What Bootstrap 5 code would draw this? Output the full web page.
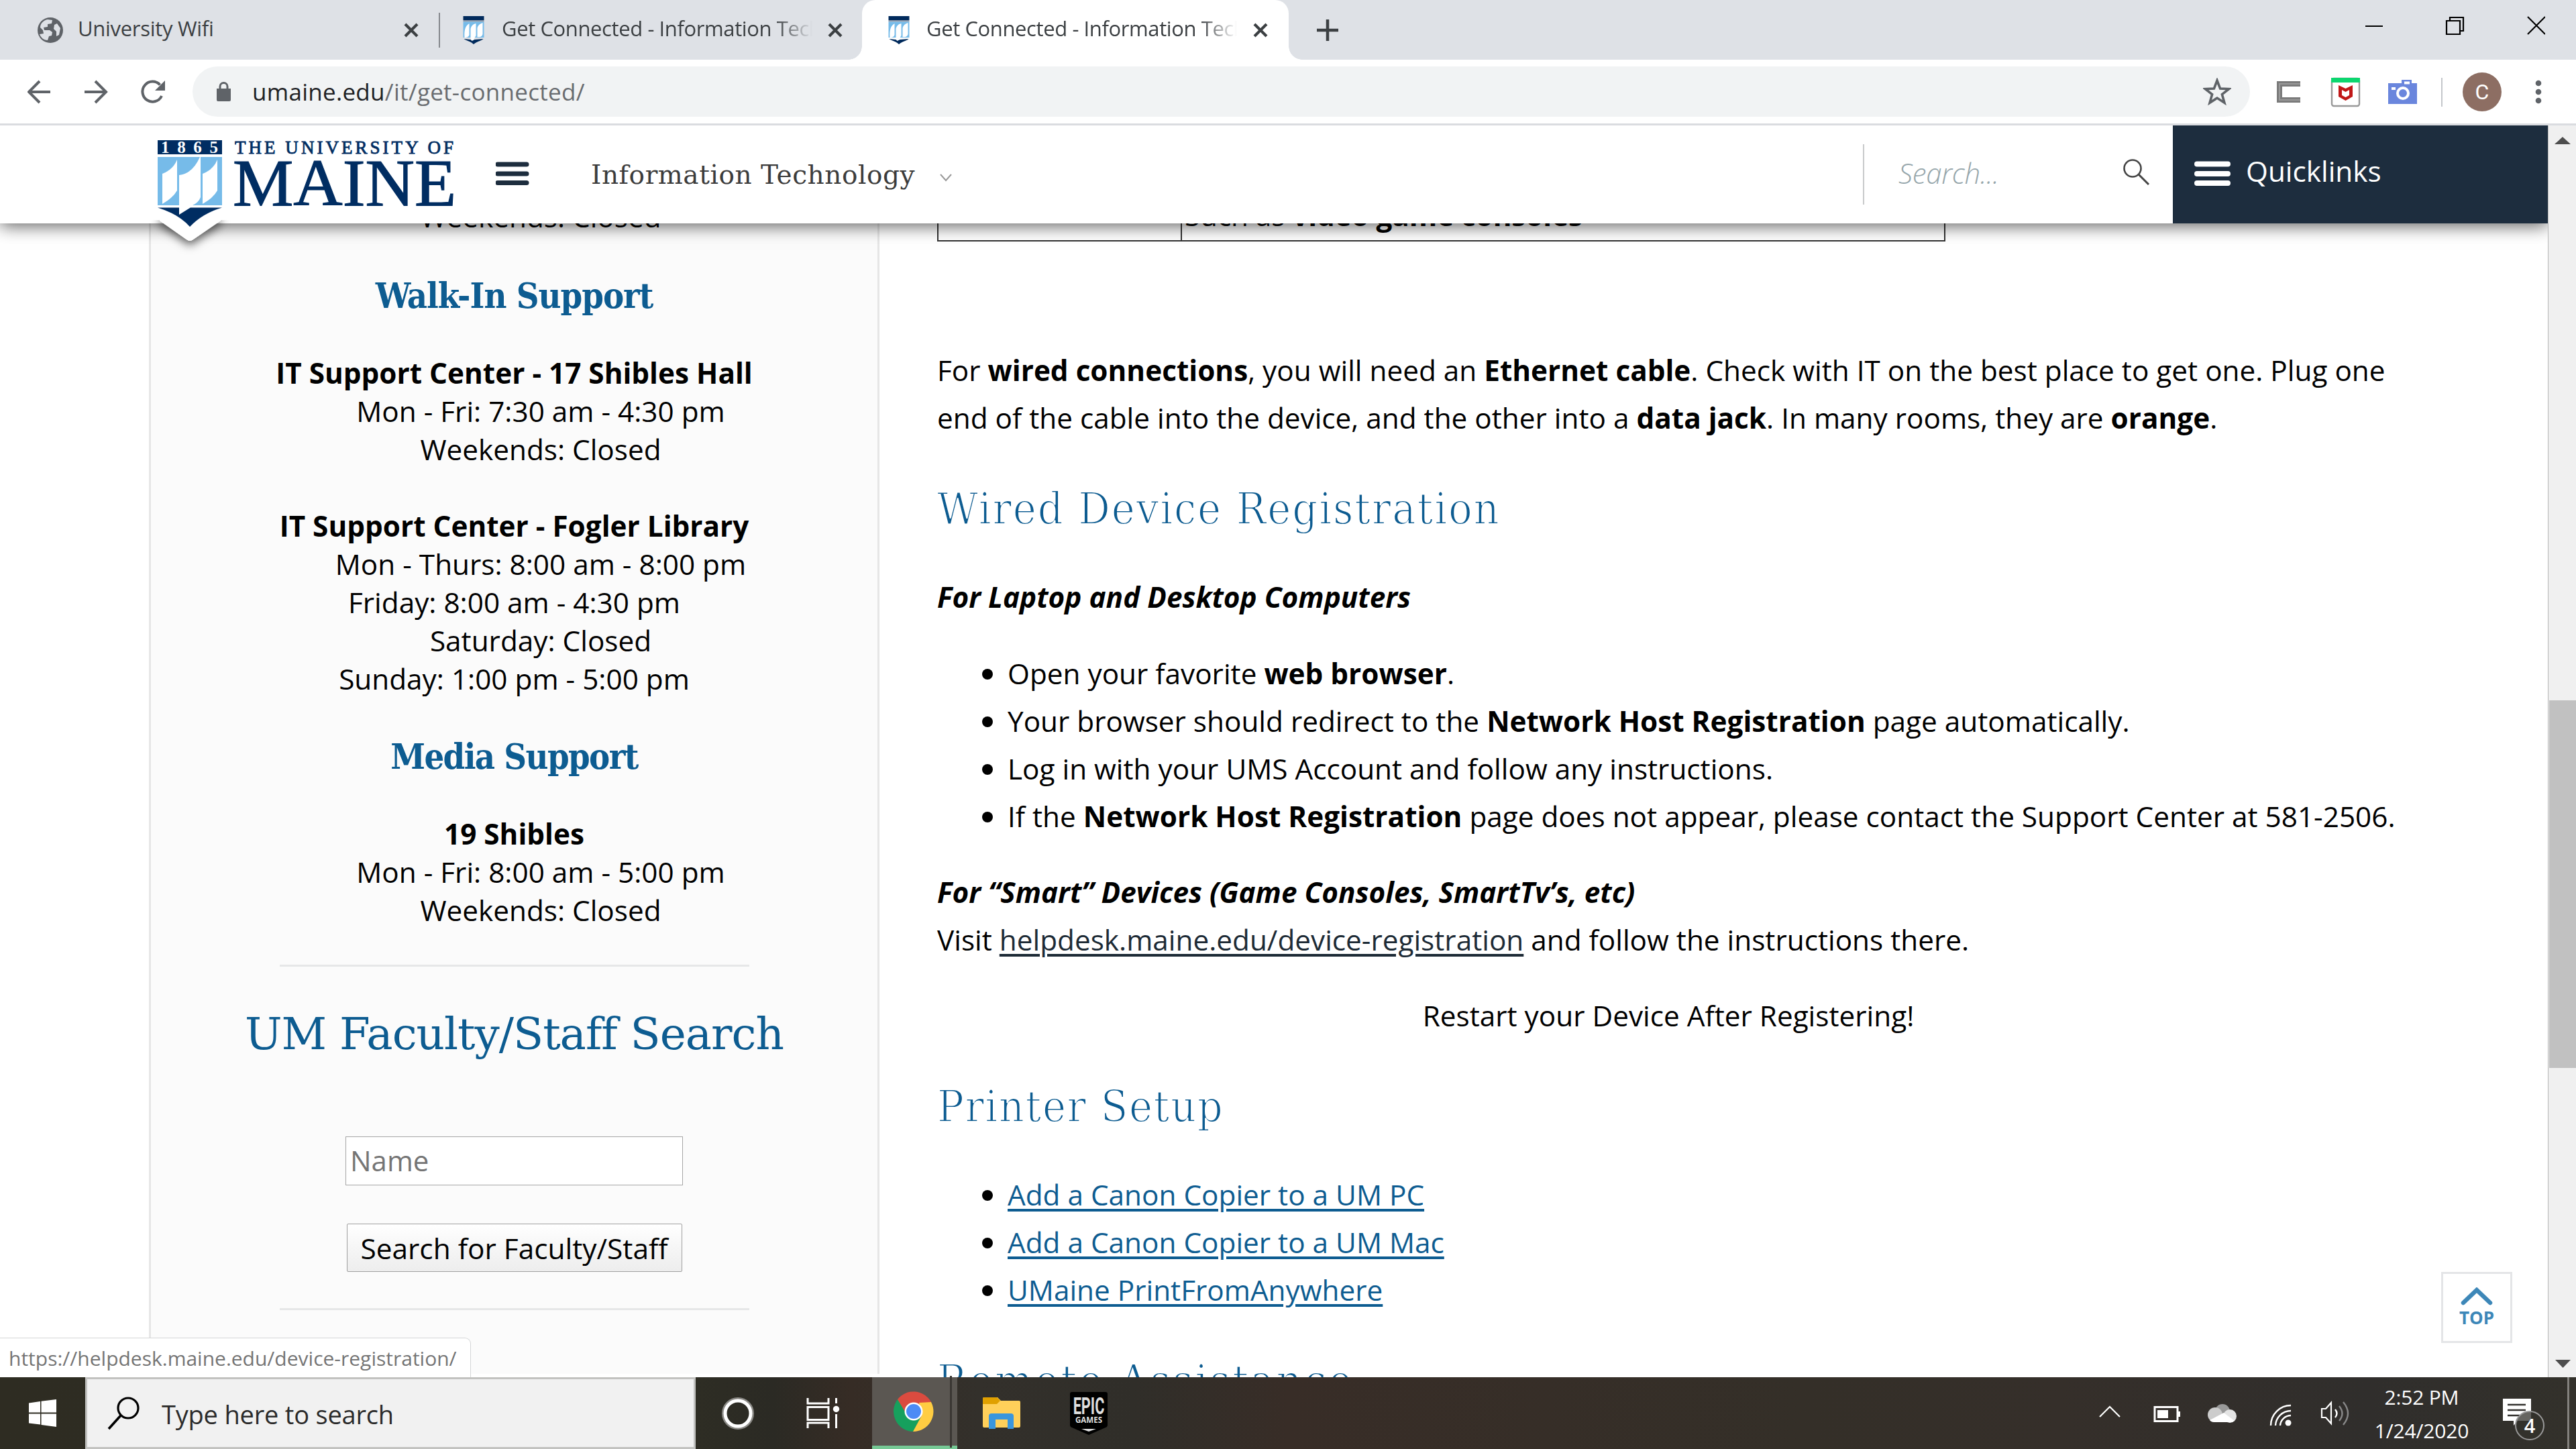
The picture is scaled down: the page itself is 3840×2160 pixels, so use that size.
<!DOCTYPE html>
<html lang="en">
<head>
<meta charset="utf-8">
<title>Get Connected - Information Technology</title>
<link href="https://cdn.jsdelivr.net/npm/bootstrap@5.3.0/dist/css/bootstrap.min.css" rel="stylesheet">
<style>
html,body{width:3840px;height:2160px;overflow:hidden}
body{font-family:"Open Sans",sans-serif;font-size:42.300px;line-height:57px;color:#000;background:#fff}
svg{display:block;flex:none}
.tabstrip{height:89px;background:#dee1e6;font-size:31px;line-height:89px;color:#3c4043;letter-spacing:-.4px}
.btab{height:89px}
.btab .ttl{overflow:hidden;white-space:nowrap;height:89px;line-height:84px;width:463px}
.fade-r{-webkit-mask-image:linear-gradient(90deg,#000 88%,transparent 100%)}
.t1{width:655px;padding-left:56px}.t2{width:630px;padding-left:34px}.t3{width:636px;padding-left:39px;background:#fff;border-radius:20px 20px 0 0}
.t1 .ttl{margin-left:22px;width:486px;letter-spacing:-.3px}.t2 .ttl{margin-left:25px}.t3 .ttl{margin-left:25px}
.t2 .cls{margin-left:23px}.t3 .cls{margin-left:24px}
.t3::before,.t3::after{content:"";position:absolute;bottom:0;width:20px;height:20px}
.t3::before{left:-20px;background:radial-gradient(circle at 0 0,transparent 19.5px,#fff 20px)}
.t3::after{right:-20px;background:radial-gradient(circle at 100% 0,transparent 19.5px,#fff 20px)}
.tsep{width:2px;height:52px;background:#85888d;margin:1px -1px 0}
.newtab{margin-left:41px}
.winctl{margin:0 46px 14px auto}
.toolbar{height:98px;border-bottom:3px solid #dadce0;padding-left:41px;background:#fff}
.omni{width:3067px;height:75px;border-radius:38px;background:#f1f3f4;margin-left:40px;padding:0 28px 0 36px;font-size:35px;color:#202124}
.omni .url{line-height:70px;margin-left:32px;white-space:nowrap;letter-spacing:.28px}
.omni .path{color:#696c70}
.exts{margin-left:37px}
.site{height:146px;background:#fff;width:3798px;z-index:5;box-shadow:0 4px 24px rgba(0,0,0,.62);clip-path:inset(0 0 -60px 0)}
.slab{font-family:"DejaVu Serif Condensed","DejaVu Serif",serif;font-stretch:condensed}
.slab-w{font-family:"DejaVu Serif",serif}
.brand{width:460px;height:180px;margin-left:222px;overflow:visible}
.burger{margin:-3px 0 0 57px}
.dept{font-size:39px;color:#3c3c3c;margin:2px 0 0 92px;width:484px;white-space:nowrap;line-height:56px;letter-spacing:.55px}
.chev{margin:10px 1358px 0 36px}
.vsep{width:2px;height:90px;background:#c8cacb}
.srch{font-style:italic;font-weight:300;font-size:42px;color:#96a6ab;margin:-5px 0 0 51px;width:335px;letter-spacing:-.3px}
.glass{margin-top:-6px}
.quick{width:559px;height:146px;background:#1d2d3e;color:#fff;padding-left:32px;font-size:42.300px}
.quick .lbl{margin:-12px 0 0 23px}
.quick svg{margin-top:-3px}
.vport{height:1720px}
.side{margin-left:222px;width:1089px;height:1715px;border:solid #e6e6e6;border-width:0 3px;background:#fbfbfb;text-align:center;overflow:hidden;flex:none}
.side p{margin:0;white-space:nowrap}
.side .ind{padding-left:79px}
.side .first{margin-top:-39px}
.side .gap{margin-top:57px}
.side .after-h{margin-top:56px}
.h-sm{font-size:52px;line-height:60px;font-weight:700;color:#0d5c91;margin:57px 0 0;white-space:nowrap}
.walk{margin-top:60px;letter-spacing:-1px}.media{margin-top:58px;letter-spacing:-1.6px}
.h-lg{font-size:66px;line-height:80px;color:#0d5c91;margin:61px 0 0;font-weight:400;white-space:nowrap}
.h-fac{letter-spacing:-1.05px}
.h-thin{-webkit-text-stroke:1.800px #fff}
.ls-a{letter-spacing:1.85px}.ls-b{letter-spacing:1.5px}.ls-c{letter-spacing:3.1px}
.rule{width:700px;height:3px;background:#e6e7e8;margin:0 auto}
.side .rule.r1{margin-top:53px}
.namebox{width:503px;height:73px;border:1px solid #a6a6a6;border-radius:0;background:#fff;margin:112px auto 0;padding:0 6px;font-size:42px;line-height:70px;color:#757575;text-align:left}
.gobtn{display:block;width:500px;height:72px;border:1px solid #a0a0a0;border-radius:2px;background:linear-gradient(#fff,#ededed);margin:57px auto 54px;padding:0;font-size:42.400px;line-height:67px;color:#000;white-space:nowrap}
.main{margin-left:86px;width:2180px;line-height:71px;flex:none}
.main p{margin:0;white-space:nowrap}
.main p.intro{margin-top:156px}.main p.sub1{margin-top:55px}.main p.sub2{margin-top:42px}.main p.again{margin-top:42px}
.tbl{width:1503px;height:27px;border:solid #333;border-width:0 2px 2px 2px;line-height:57px}
.tbl .c1{width:363px;border-right:2px solid #333}
.tbl .c2{padding-left:4px;white-space:nowrap;margin-top:-41px;letter-spacing:-.1px}
.pts{list-style:none;margin:43px 0 0;padding:0 0 0 105px}
.pts.prn{margin-top:55px}
.pts li{white-space:nowrap;position:relative}
.pts li::before{content:"";position:absolute;left:-38px;top:29px;width:16px;height:16px;border-radius:50%;background:#000}
.main a{color:#0d5c91;text-decoration-thickness:4px;text-underline-offset:5px}
.main a.dk{color:#1d2b36}
.sbar{width:42px;background:#f0f0f0;border-left:1px solid #b8b8b8;right:0;top:187px;height:1866px;z-index:4}
.thumb{width:40px;height:548px;margin-left:1px;background:#c1c1c1}
.topbtn{left:3639px;top:1896px;width:106px;height:106px;border:3px solid #e4e5e7;background:#fff;color:#3d87b8;font-size:26px;font-weight:700;line-height:34px}
.topbtn svg{margin-top:20px}
.status{left:0;top:1994px;width:702px;height:59px;background:#fff;border:1px solid #d4d5d6;border-width:1px 1px 0 0;border-top-right-radius:9px;padding-left:13px;font-size:30px;line-height:60px;color:#757575;white-space:nowrap;z-index:6}
.taskbar{height:107px;background:linear-gradient(90deg,#2e2c22 0,#2e2d24 27%,#2b2a24 30%,#362c25 33%,#33302b 38%,#302e29 44%,#382d27 50%,#342f28 70%,#352f2a 80%,#302e2c 92%,#33312b 100%);color:#fff}
.startb{width:127px;padding-left:43px;padding-bottom:1px}
.tsearch{width:910px;height:107px;border:3px solid #c2c2c0;background:#f1f1f1;color:#2b2b2b;font-size:38px;padding-left:30px;letter-spacing:-.2px}
.tsearch div{margin:3px 0 0 33px}
.chrometile{width:127px;height:107px;background:#5b5752;border-bottom:5px solid #76c995;margin-left:48px;padding-left:32px}
.chrometile .edge{width:3px;height:107px;background:#3a3733;margin:0 8px 0 auto}
.apps{margin-left:38px}
.tray{margin-left:1475px}
.clock{font-size:30px;line-height:50px;width:170px;text-align:center;margin:2px 0 0 19px;letter-spacing:-.2px}
.notif{margin:18px 0 0 34px}
.peek{width:3px;height:107px;background:#83817d;margin-left:32px}
</style>
</head>
<body class="d-flex flex-column position-relative">
<svg width="0" height="0" class="position-absolute"><defs>
<symbol id="crest" viewBox="0 0 31 42"><path fill="#002a5c" d="M0 0h31v6H0z"/><path fill="#8b99ab" d="M0 6h31v2.500H0z"/><path fill="#76bbe9" d="M0 8.500h31V32H0z"/><path fill="#fff" d="M2 32c-.5-9 0-17 7-21v17c-1 3-3 4-7 4zm9 0V19c1-4 3-7 8-8v18l-5 9c-2-2-3-4-3-6zm10-1V18c1-4 3-6 8-8v17c-1 3-3 5-8 4z"/><path fill="#002a5c" d="M1 34l10 1 2 2 4-2 13-1c-3 3-8 3-14.500 8C10 37 5 37 1 34z"/></symbol>
<symbol id="xx" viewBox="0 0 22 22"><path d="M2 2l18 18M20 2L2 20" stroke="#3c4043" stroke-width="4.200"/></symbol>
</defs></svg>

<div class="tabstrip d-flex align-items-center">
  <div class="btab t1 d-flex align-items-center">
    <svg width="38" height="38" viewBox="0 0 38 38"><circle cx="19" cy="19" r="19" fill="#5f6368"/><path d="M4 15c0-6 5-11 11-12l7 1-1 5-6 1v4l-6 1 1 4 8 0 4 3-1 5-4 1-2 6c-6 0-10-4-12-9l6-1-1-5z" fill="#dee1e6"/><path d="M29 9l5 7-2 10-4 2 0-7-4-4 1-6z" fill="#dee1e6"/></svg>
    <div class="ttl">University Wifi</div>
    <svg width="22" height="22"><use href="#xx"/></svg>
  </div>
  <div class="tsep"></div>
  <div class="btab t2 d-flex align-items-center">
    <svg width="34" height="42"><use href="#crest"/></svg>
    <div class="ttl fade-r">Get Connected - Information Technology</div>
    <svg class="cls" width="22" height="22"><use href="#xx"/></svg>
  </div>
  <div class="btab t3 d-flex align-items-center position-relative">
    <svg width="32" height="42"><use href="#crest"/></svg>
    <div class="ttl fade-r">Get Connected - Information Technology</div>
    <svg class="cls" width="22" height="22"><use href="#xx"/></svg>
  </div>
  <svg class="newtab" width="34" height="34" viewBox="0 0 34 34"><path d="M17 1v32M1 17h32" stroke="#3c4043" stroke-width="4.500"/></svg>
  <svg class="winctl" width="268" height="28" viewBox="0 0 268 28"><g fill="none" stroke="#000" stroke-width="2.200"><path d="M0 15h26M121 7h20v20h-20zM126 7V2h20v20h-5M242 1l26 26M268 1l-26 26"/></g></svg>
</div>

<div class="toolbar d-flex align-items-center">
  <svg width="206" height="38" viewBox="0 0 206 38"><g fill="none" stroke="#5f6368" stroke-width="4"><path d="M34 19H3M18 3L2 19l16 16M85 19h31M101 3l16 16-16 16"/><path d="M197.500 8.500A15 15 0 1 0 200 25"/></g><path d="M205 2v15h-15z" fill="#5f6368"/></svg>
  <div class="omni d-flex align-items-center">
    <svg width="21" height="29" viewBox="0 0 21 29"><path d="M0 10h21v17q0 2-2 2H2q-2 0-2-2z" fill="#5f6368"/><path d="M5 11V7a5.500 5.500 0 0 1 11 0v4" fill="none" stroke="#5f6368" stroke-width="3"/></svg>
    <div class="url">umaine.edu<span class="path">/it/get-connected/</span></div>
    <svg class="ms-auto" width="42" height="42" viewBox="0 0 42 42"><path d="M21 4l4.600 12.100 13 .6-10.200 8 3.500 12.500L21 30.100l-10.900 7.100 3.500-12.500-10.200-8 13-.6z" fill="none" stroke="#5f6368" stroke-width="3.600"/></svg>
  </div>
  <svg class="exts" width="410" height="60" viewBox="3390 106 410 60">
    <path d="M3428 124h-31v24h31" fill="none" stroke="#7b7b7b" stroke-width="8"/><path d="M3428 124h-31v24h31" fill="none" stroke="#999" stroke-width="2"/>
    <rect x="3475" y="116" width="41" height="41" rx="3" fill="#fff" stroke="#999" stroke-width="2.400"/><path d="M3474 115h43v7h-43z" fill="#0cd66f"/><path d="M3485 126l10.500 5 10.500-5v17l-10.500 6-10.500-6z" fill="#c01818"/><path d="M3490 133l5.500 3 5.500-3v8l-5.500 3-5.500-3z" fill="#fff"/>
    <path d="M3559 123h20v-5h15v5h8v31h-43z" fill="#6a86dd"/><path d="M3583 120.500h8v4h-8z" fill="#fff"/><circle cx="3581" cy="138" r="8" fill="none" stroke="#fff" stroke-width="4"/><path d="M3564 129h6v4h-6z" fill="#fff"/>
    <path d="M3639 115v43" stroke="#c4c7cb" stroke-width="2"/>
    <circle cx="3699" cy="136" r="29" fill="#8d6e63"/><text x="3699" y="147" text-anchor="middle" font-family="Roboto" font-size="32" fill="#fff">C</text>
    <g fill="#5f6368"><circle cx="3783" cy="123" r="4.300"/><circle cx="3783" cy="136" r="4.300"/><circle cx="3783" cy="149" r="4.300"/></g>
  </svg>
</div>

<div class="site d-flex align-items-center position-relative flex-shrink-0">
  <svg class="brand align-self-start" viewBox="222 187 460 180">
    <defs><filter id="sh" x="-40%" y="-40%" width="180%" height="200%"><feDropShadow dx="0" dy="6" stdDeviation="7" flood-opacity=".6"/></filter></defs>
    <path d="M238 320h91v9l-41 28q-5 4-10 0l-40-28z" fill="#fff" filter="url(#sh)"/>
    <path d="M222 280h122v48H222z" fill="#fff"/>
    <path d="M235 209h96v21h-96z" fill="#002d62"/>
    <text x="240" y="228" font-family="Liberation Serif" font-weight="700" font-size="25" fill="#fff" textLength="85">1865</text>
    <path d="M235 234h96v72h-96z" fill="#76bbe9"/>
    <path d="M235 309.500Q266 319 283 338Q302 318 331 309.500z" fill="#002d62"/>
    <path d="M242 304V259Q258 253 264 238V284Q258 295 242 304zM267 320V261Q287 259 298 234H299V294Q296 302 287 306L283 310zM302 304V259Q318 253 324 238V284Q318 295 302 304z" fill="#fff"/>
    <g font-family="Liberation Serif" fill="#002d62" stroke="#002d62"><text x="350" y="228.500" font-size="27" stroke-width=".8" textLength="326">THE UNIVERSITY OF</text>
    <text x="347" y="306" font-size="99" stroke-width="1.200" textLength="333" lengthAdjust="spacingAndGlyphs">MAINE</text></g>
  </svg>
  <svg class="burger" width="50" height="36" viewBox="0 0 50 36"><path d="M3 4h43M3 18h43M3 31.500h43" stroke="#1d2d3e" stroke-width="7" stroke-linecap="round"/></svg>
  <div class="dept slab-w">Information Technology</div>
  <svg class="chev" width="18" height="12" viewBox="0 0 18 12"><path d="M1 1l8 9 8-9" fill="none" stroke="#999" stroke-width="2"/></svg>
  <div class="vsep"></div>
  <div class="srch">Search...</div>
  <svg class="glass" width="40" height="40" viewBox="0 0 40 40"><circle cx="14" cy="14" r="12.500" fill="none" stroke="#444" stroke-width="2.600"/><path d="M23 23l15 15" stroke="#444" stroke-width="3"/></svg>
  <div class="quick d-flex align-items-center ms-auto">
    <svg width="54" height="38" viewBox="0 0 54 38"><path d="M4 4.500h46M4 19h46M4 33h46" stroke="#fff" stroke-width="8" stroke-linecap="round"/></svg>
    <div class="lbl">Quicklinks</div>
  </div>
</div>

<div class="vport d-flex overflow-hidden flex-shrink-0">
  <aside class="side">
    <p class="first ind">Weekends: Closed</p>
    <h3 class="h-sm slab walk">Walk-In Support</h3>
    <p class="after-h"><b>IT Support Center - 17 Shibles Hall</b></p>
    <p class="ind">Mon - Fri: 7:30 am - 4:30 pm</p>
    <p class="ind">Weekends: Closed</p>
    <p class="gap"><b>IT Support Center - Fogler Library</b></p>
    <p class="ind">Mon - Thurs: 8:00 am - 8:00 pm</p>
    <p>Friday: 8:00 am - 4:30 pm</p>
    <p class="ind">Saturday: Closed</p>
    <p>Sunday: 1:00 pm - 5:00 pm</p>
    <h3 class="h-sm slab media">Media Support</h3>
    <p class="after-h"><b>19 Shibles</b></p>
    <p class="ind">Mon - Fri: 8:00 am - 5:00 pm</p>
    <p class="ind">Weekends: Closed</p>
    <div class="rule r1"></div>
    <h2 class="h-lg slab-w h-fac">UM Faculty/Staff Search</h2>
    <div class="namebox form-control">Name</div>
    <button class="gobtn" type="button">Search for Faculty/Staff</button>
    <div class="rule"></div>
  </aside>
  <main class="main">
    <div class="tbl d-flex"><div class="c1"></div><div class="c2">Such as <b>video game consoles</b></div></div>
    <p class="intro">For <b>wired connections</b>, you will need an <b>Ethernet cable</b>. Check with IT on the best place to get one. Plug one</p>
    <p>end of the cable into the device, and the other into a <b>data jack</b>. In many rooms, they are <b>orange</b>.</p>
    <h2 class="h-lg slab h-thin ls-a">Wired Device Registration</h2>
    <p class="sub1"><b><i>For Laptop and Desktop Computers</i></b></p>
    <ul class="pts">
      <li>Open your favorite <b>web browser</b>.</li>
      <li>Your browser should redirect to the <b>Network Host Registration</b> page automatically.</li>
      <li>Log in with your UMS Account and follow any instructions.</li>
      <li>If the <b>Network Host Registration</b> page does not appear, please contact the Support Center at 581-2506.</li>
    </ul>
    <p class="sub2"><b><i>For “Smart” Devices (Game Consoles, SmartTv’s, etc)</i></b></p>
    <p>Visit <a class="dk" href="#">helpdesk.maine.edu/device-registration</a> and follow the instructions there.</p>
    <p class="again text-center">Restart your Device After Registering!</p>
    <h2 class="h-lg slab h-thin ls-b">Printer Setup</h2>
    <ul class="pts prn">
      <li><a href="#">Add a Canon Copier to a UM PC</a></li>
      <li><a href="#">Add a Canon Copier to a UM Mac</a></li>
      <li><a href="#">UMaine PrintFromAnywhere</a></li>
    </ul>
    <h2 class="h-lg slab h-thin ls-c">Remote Assistance</h2>
  </main>
</div>

<div class="taskbar d-flex align-items-center flex-shrink-0">
  <div class="startb"><svg width="41" height="41" viewBox="0 0 41 41"><path d="M0 5.500L17 3v16.500H0zM18.500 2.800L41 0v19.500H18.500zM0 21.500h17v16L0 35.500zM18.500 21.500H41V41l-22.500-3z" fill="#fff"/></svg></div>
  <div class="tsearch d-flex align-items-center">
    <svg width="48" height="50" viewBox="0 0 48 50"><circle cx="31" cy="17" r="15" fill="none" stroke="#000" stroke-width="3.200"/><path d="M20 28L2 48" stroke="#000" stroke-width="3.600"/></svg>
    <div>Type here to search</div>
  </div>
  <svg width="215" height="60" viewBox="1037 2076 215 60"><circle cx="1100" cy="2106" r="21.500" fill="none" stroke="#8b8a86" stroke-width="5"/><circle cx="1100" cy="2106" r="19" fill="none" stroke="#fff" stroke-width="5"/>
    <path d="M1204 2083v8h31v-8M1204 2128v-8h31v8M1204 2096.500h31v19h-31zM1246.500 2083v8M1246.500 2107v21" fill="none" stroke="#fff" stroke-width="3"/><circle cx="1246.500" cy="2099.500" r="4.700" fill="#fff"/></svg>
  <div class="chrometile d-flex align-items-center">
    <svg width="60" height="60" viewBox="-30 -30 60 60"><path d="M0 0L-24-18A30 30 0 0 1 26-14z" fill="#db4b3f"/><path d="M-24-18A30 30 0 0 0-1 30L10 10 0 4z" fill="#16a05d"/><path d="M26-14A30 30 0 0 1-1 30L12 6 8-13z" fill="#ffcd42"/><path d="M0-14h26.500L-24-18-12 2z" fill="#db4b3f"/><circle r="13.500" fill="#fff"/><circle r="11" fill="#4c8bf5"/></svg>
    <div class="edge"></div>
  </div>
  <svg class="apps" width="186" height="66" viewBox="1464 2073 186 66"><path d="M1464 2084q0-2 2-2h20l5 5h27q2 0 2 2v36q0 2-2 2h-52q-2 0-2-2z" fill="#ffd05a"/><path d="M1464 2084q0-2 2-2h19l5 5-5 5h-21z" fill="#e0a000"/><path d="M1473 2129v-19q0-4 4-4h29q4 0 4 4v19h-9v-14h-18v14z" fill="#3a96dd"/>
    <path d="M1594 2077q0-3 3-3h50q3 0 3 3v46q0 3-3 4l-25 11-25-11q-3-1-3-4z" fill="#000"/><path d="M1611 2129h22l-11 4z" fill="#ddd"/>
    <g font-weight="700" fill="#dedede" text-anchor="middle"><text transform="translate(1622 2107) scale(.62 1)" font-family="Roboto" font-size="35">EPIC</text><text x="1622" y="2120" font-family="Open Sans" font-size="11.500" textLength="40" lengthAdjust="spacingAndGlyphs">GAMES</text></g></svg>
  <svg class="tray" width="380" height="50" viewBox="3125 2081 380 50"><g fill="none" stroke="#fff"><path d="M3129 2111l15-15 15 15" stroke-width="2.200"/><path d="M3211 2096.500h34v21h-34z" stroke-width="3"/><path d="M3384 2124a30 30 0 0 1 30-30M3391 2124a23 23 0 0 1 23-22M3398 2124a16 16 0 0 1 16-15" stroke-width="2.400"/><path d="M3460 2099h6l8-9v31l-8-9h-6z" stroke-width="2.200"/><path d="M3480 2100q5 6 0 12" stroke-width="2.400"/><path d="M3486 2095q9 11 0 22M3492 2089q14 17 0 34" stroke="#888" stroke-width="2.400"/></g><path d="M3215 2101h16v12h-16zM3245 2103h4v8h-4z" fill="#fff"/><circle cx="3410" cy="2120" r="4.500" fill="#fff"/>
    <circle cx="3312" cy="2103" r="11" fill="#999"/><circle cx="3301" cy="2108" r="11" fill="#ccc"/><circle cx="3323" cy="2110" r="10" fill="#e4e4e4"/><path d="M3293 2116l21-11 16 12q-2 2-6 2h-24q-5 0-7-3z" fill="#fff"/></svg>
  <div class="clock">2:52 PM<br>1/24/2020</div>
  <svg class="notif" width="66" height="66" viewBox="3729 2083 66 66"><path d="M3731 2085h42v33h-20l-6 7v-7h-16z" fill="#fff"/><path d="M3738 2094h27M3738 2102h27M3738 2110h18" stroke="#33312e" stroke-width="2.400"/><circle cx="3771" cy="2125" r="21" fill="#33312c" fill-opacity=".75"/><circle cx="3771" cy="2125" r="21" fill="none" stroke="#999" stroke-width="2"/><text x="3771" y="2136" text-anchor="middle" font-family="Open Sans" font-weight="600" font-size="29" fill="#fff">4</text></svg>
  <div class="peek"></div>
</div>

<div class="sbar position-absolute d-flex flex-column">
  <svg width="41" height="857" viewBox="0 0 41 857"><path d="M9 28l12-11 12 11z" fill="#4d4d4d"/></svg>
  <div class="thumb"></div>
  <svg class="mt-auto" width="41" height="40" viewBox="0 0 41 40"><path d="M10 14h23L21.500 26z" fill="#4d4d4d"/></svg>
</div>
<a class="topbtn position-absolute d-flex flex-column align-items-center text-decoration-none"><svg width="48" height="28" viewBox="0 0 48 28"><path d="M4 23L24 4l20 19" fill="none" stroke="#3d87b8" stroke-width="6.500" stroke-linecap="round"/></svg>TOP</a>
<div class="status position-absolute">https://helpdesk.maine.edu/device-registration/</div>
<script src="https://cdn.jsdelivr.net/npm/bootstrap@5.3.0/dist/js/bootstrap.bundle.min.js"></script>
</body>
</html>
